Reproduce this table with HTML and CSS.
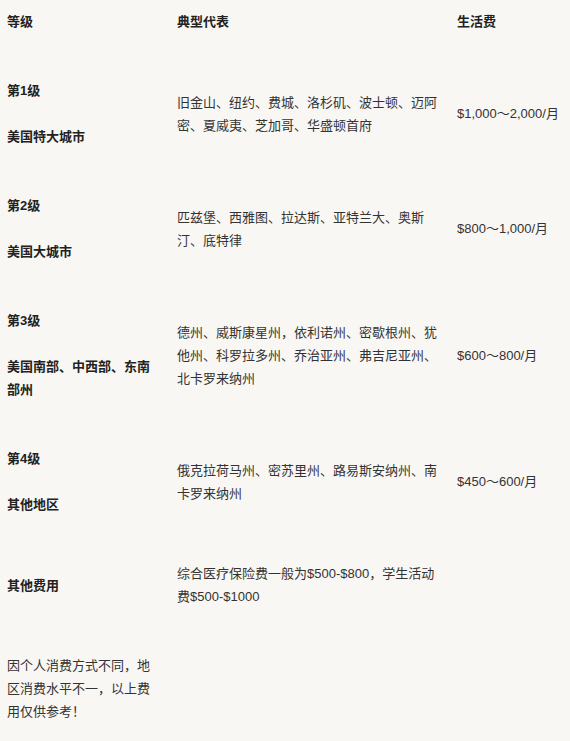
FILE: index.html
```html
<!DOCTYPE html>
<html lang="zh-CN">
<head>
<meta charset="utf-8">
<title>美国生活费等级</title>
<link rel="stylesheet" href="styles.css">
</head>
<body>
<table class="cost-table">
  <colgroup>
    <col class="col-level">
    <col class="col-cities">
    <col class="col-cost">
  </colgroup>
  <thead>
    <tr>
      <th>等级</th>
      <th>典型代表</th>
      <th>生活费</th>
    </tr>
  </thead>
  <tbody>
    <tr>
      <td class="level"><p>第1级</p><p>美国特大城市</p></td>
      <td>旧金山、纽约、费城、洛杉矶、波士顿、迈阿密、夏威夷、芝加哥、华盛顿首府</td>
      <td>$1,000～2,000/月</td>
    </tr>
    <tr>
      <td class="level"><p>第2级</p><p>美国大城市</p></td>
      <td>匹兹堡、西雅图、拉达斯、亚特兰大、奥斯汀、底特律</td>
      <td>$800～1,000/月</td>
    </tr>
    <tr>
      <td class="level"><p>第3级</p><p>美国南部、中西部、东南部州</p></td>
      <td>德州、威斯康星州，依利诺州、密歇根州、犹他州、科罗拉多州、乔治亚州、弗吉尼亚州、北卡罗来纳州</td>
      <td>$600～800/月</td>
    </tr>
    <tr>
      <td class="level"><p>第4级</p><p>其他地区</p></td>
      <td>俄克拉荷马州、密苏里州、路易斯安纳州、南卡罗来纳州</td>
      <td>$450～600/月</td>
    </tr>
    <tr>
      <td class="level"><p>其他费用</p></td>
      <td>综合医疗保险费一般为$500-$800，学生活动费$500-$1000</td>
      <td></td>
    </tr>
    <tr>
      <td class="note">因个人消费方式不同，地区消费水平不一，以上费用仅供参考！</td>
      <td></td>
      <td></td>
    </tr>
  </tbody>
</table>
</body>
</html>
```

FILE: styles.css
```css
html, body {
  margin: 0;
  padding: 0;
  background: #f8f7f3;
}

body {
  font-family: "Liberation Sans", "Noto Sans CJK SC", sans-serif;
  font-size: 13px;
  line-height: 23px;
  color: #333;
}

.cost-table {
  width: 570px;
  table-layout: fixed;
  border-collapse: collapse;
  border-spacing: 0;
}

.col-level { width: 170px; }
.col-cities { width: 280px; }
.col-cost { width: 120px; }

.cost-table th,
.cost-table td {
  padding: 23px 10px 23px 7px;
  vertical-align: middle;
  text-align: left;
}

.cost-table th {
  padding-top: 10px;
  font-weight: bold;
  color: #222;
}

.level {
  font-weight: bold;
  color: #222;
}

.level p {
  margin: 0 0 23px;
}

.level p:last-child {
  margin-bottom: 0;
}

.note {
  color: #333;
}
```
